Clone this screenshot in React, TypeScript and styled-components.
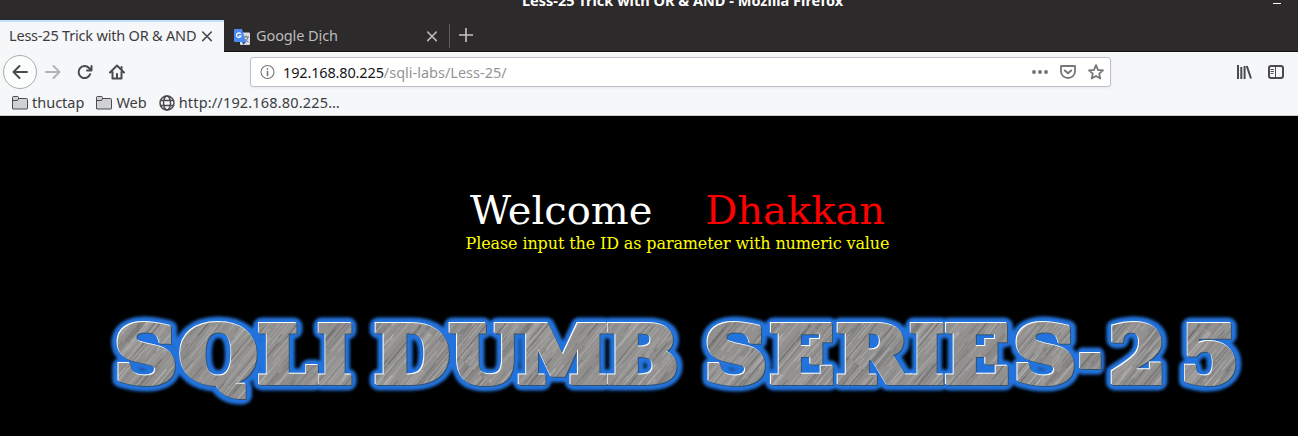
import React from "react";
import styled, { createGlobalStyle } from "styled-components";

const GlobalStyle = createGlobalStyle`
  body { margin: 0; background: #000; }
  * { box-sizing: border-box; }
`;

const Window = styled.div`
  width: 1298px;
  height: 436px;
  display: flex;
  flex-direction: column;
  overflow: hidden;
  background: #000;
  font-family: "Noto Sans", "Open Sans", sans-serif;
  color: #3c3c3f;
`;

const TitleBar = styled.header`
  height: 20px;
  flex: none;
  display: flex;
  position: relative;
  justify-content: center;
  background: #2c2a2b;
  padding-left: 67px;
`;

const Title = styled.div`
  height: 20px;
  margin-top: -10px;
  line-height: 20px;
  font-size: 14.5px;
  font-weight: 700;
  color: #fff;
  white-space: pre;
  letter-spacing: 0.02px;
`;

const Minimize = styled.span`
  position: absolute;
  right: 17px;
  top: 3px;
  width: 8px;
  height: 1px;
  background: #fff;
`;

const TabStrip = styled.nav`
  height: 32px;
  flex: none;
  display: flex;
  background: #2c2a2b;
  box-shadow: inset 0 -1px #151415;
`;

const Tab = styled.div<{ $active?: boolean }>`
  width: ${(p) => (p.$active ? 224 : 225)}px;
  height: 32px;
  display: flex;
  align-items: center;
  padding: 0 10px 0 ${(p) => (p.$active ? 9 : 10)}px;
  color: ${(p) => (p.$active ? "#3c3c3f" : "#bdbcbc")};
  background: ${(p) => (p.$active ? "#f5f7f9" : "transparent")};
  border-top: 2px solid ${(p) => (p.$active ? "#bfe4ff" : "transparent")};
`;

const Label = styled.span<{ $spacing?: number }>`
  font-size: 14.5px;
  line-height: 20px;
  white-space: pre;
  letter-spacing: ${(p) => p.$spacing ?? 0}px;
`;

const TabLabel = styled(Label)`
  flex: 1;
  width: 0;
  margin-top: -4px;
`;

const Favicon = styled.svg`
  margin: -1px 6px 0 0;
`;

const Divider = styled.i`
  width: 1px;
  height: 24px;
  margin: 4px 8px 0 0;
  background: #5d5b5c;
`;

const Toolbar = styled.div`
  height: 40px;
  flex: none;
  display: flex;
  align-items: center;
  padding: 0 14px 0 3px;
  background: #f5f7f9;
`;

const BackButton = styled.button`
  width: 34px;
  height: 34px;
  padding: 0;
  display: grid;
  place-items: center;
  border: 1px solid #a9aaab;
  border-radius: 50%;
  background: #fcfdfd;
`;

const NavIcons = styled.div`
  display: flex;
  gap: 16px;
  margin-left: 8px;
`;

const AddressBar = styled.div`
  width: 861px;
  height: 30px;
  margin: 0 0 0 125px;
  padding: 0 6px 0 9px;
  display: flex;
  align-items: center;
  border: 1px solid #bfc1c8;
  border-radius: 3px;
  background: #fff;
  box-shadow: 0 1px 3px rgba(0, 0, 0, 0.06);
`;

const Url = styled(Label)`
  flex: 1;
  margin-left: 7px;
  color: #959595;
`;

const Host = styled.span`
  color: #161618;
  letter-spacing: -0.15px;
`;

const UrlActions = styled.div`
  display: flex;
  gap: 12px;
`;

const WindowActions = styled.div`
  display: flex;
  gap: 16px;
  margin-left: auto;
`;

const Bookmarks = styled.div`
  height: 24px;
  flex: none;
  display: flex;
  align-items: center;
  gap: 12px;
  padding: 0 12px 2px;
  background: #f5f7f9;
  border-bottom: 1px solid #ccc;
`;

const Bookmark = styled.div`
  display: flex;
  align-items: center;
  gap: 4px;

  & > span {
    margin-top: -2px;
  }
`;

const Page = styled.main`
  height: 320px;
  flex: none;
  padding: 70px 0 0 57px;
  background: #000;
  font-family: "DejaVu Serif", serif;
  text-align: center;
`;

const Heading = styled.h1`
  margin: 0;
  font-size: 40px;
  line-height: 48px;
  font-weight: 400;
  color: #fff;
  white-space: pre;
`;

const Accent = styled.span`
  margin-left: 2px;
  color: #f00;
`;

const Message = styled.p`
  margin: 0;
  font-size: 16px;
  line-height: 19px;
  letter-spacing: -0.12px;
  color: #ff0;
`;

const Banner = styled.svg`
  display: block;
  margin: 47px 0 0 -57px;
`;

const Icon = ({ children, color = "#4b4b4d", width = 2 }: { children: React.ReactNode; color?: string; width?: number }) => (
  <svg width="16" height="16" viewBox="0 0 16 16" fill="none" stroke={color} strokeWidth={width} strokeLinecap="round" strokeLinejoin="round">
    {children}
  </svg>
);

const Close = ({ color }: { color: string }) => (
  <svg width="14" height="14" viewBox="0 0 14 14" stroke={color} strokeWidth="1.6" strokeLinecap="round">
    <path d="M2.7 2l8.6 8.6M11.3 2L2.7 10.6" />
  </svg>
);

const Folder = () => (
  <Icon width={1}>
    <path d="M.5 13.5v-11q0-1 1-1h4q1 0 1 1v1h8q1 0 1 1v9q0 .5-.5.5H1q-.5 0-.5-.5z" fill="#d0d1d2" />
    <path d="M.5 5.5h5l1-2" />
  </Icon>
);

type Glyph = [char: string, left: number, width: number];

const glyphs: Glyph[] = [
  ["S", 117, 58], ["Q", 182, 73], ["L", 260, 55], ["I", 319, 32],
  ["D", 377, 70], ["U", 452, 66], ["M", 521, 84], ["B", 609, 67],
  ["S", 707, 58], ["E", 772, 60], ["R", 839, 68], ["I", 911, 32],
  ["E", 947, 60], ["S", 1016, 58], ["-", 1080, 21], ["2", 1111, 53], ["5", 1183, 54],
];

const Letters = ({ spread, ...props }: React.SVGProps<SVGGElement> & { spread: number }) => (
  <g fontFamily="DejaVu Serif, serif" fontWeight="700" fontSize="77" strokeWidth={spread} strokeMiterlimit="2" {...props}>
    {glyphs.map(([char, left, width], i) => (
      <text key={i} x={left - width * 0.03} y="81.5" textLength={width * 1.06} lengthAdjust="spacingAndGlyphs">
        {char}
      </text>
    ))}
  </g>
);

const noise = (n: number) => {
  const v = Math.sin(n * 127.1 + 11.7) * 43758.5453;
  return v - Math.floor(v);
};

const scratches = Array.from({ length: 520 }, (_, i) => ({
  x: noise(i) * 310 - 30,
  y: noise(i + 500) * 149,
  length: 15 + noise(i + 1000) * 55,
  light: noise(i + 1500) > 0.5,
  opacity: 0.15 + noise(i + 2000) * 0.4,
}));

export default function App() {
  return (
    <Window>
      <GlobalStyle />
      <TitleBar>
        <Title>Less-25 Trick with OR &amp; AND - Mozilla Firefox</Title>
        <Minimize />
      </TitleBar>
      <TabStrip>
        <Tab $active>
          <TabLabel $spacing={-0.2}>Less-25 Trick with OR &amp; AND</TabLabel>
          <Close color="#4b4b4d" />
        </Tab>
        <Tab>
          <Favicon width="16" height="16" viewBox="0 0 16 16">
            <rect x="6" y="3.5" width="10" height="12.5" rx="1" fill="#dcdcdc" />
            <path d="M9 8h6M12 6.5V8M14 8q-1 4-4 5M10.5 9.5q1 2.5 4 3.5" stroke="#667b85" fill="none" />
            <path d="M1 0h7l4 13H1q-1 0-1-1V1q0-1 1-1z" fill="#4a8af4" />
            <path d="M8 13h4l-2.5 3z" fill="#3059ba" />
            <path d="M6.7 4.8A2.3 2.3 0 1 0 7 7H4.8" stroke="#fff" strokeWidth="1.2" fill="none" />
          </Favicon>
          <TabLabel $spacing={-0.1}>Google Dịch</TabLabel>
          <Close color="#bdbcbc" />
        </Tab>
        <Divider />
        <svg width="18" height="30" viewBox="0 0 18 30" stroke="#c5c4c4" strokeWidth="1.6">
          <path d="M1 15h14M8 8v14" />
        </svg>
      </TabStrip>
      <Toolbar>
        <BackButton>
          <Icon><path d="M15 8H1.5M7.5 2L1.5 8l6 6" /></Icon>
        </BackButton>
        <NavIcons>
          <Icon color="#b2b3b5"><path d="M1 8h13.5M8.5 2l6 6-6 6" /></Icon>
          <Icon><path d="M13.2 10.2A6 6 0 1 1 12 4l2 2M14.5 2v4.5H10" /></Icon>
          <Icon>
            <path d="M1 8.5L8 1.5l7 7M3.5 8v6.5h9V8" />
            <path d="M8 14v-4M12.5 3v2" />
          </Icon>
        </NavIcons>
        <AddressBar>
          <Icon color="#777" width={1.1}>
            <circle cx="7.5" cy="8" r="6.5" />
            <path d="M7.5 7.5v4M7.5 4.8v.3" strokeWidth="1.6" />
          </Icon>
          <Url><Host>192.168.80.225</Host>/sqli-labs/Less-25/</Url>
          <UrlActions>
            <Icon color="#777">
              <g fill="#777" stroke="none"><circle cx="2" cy="8" r="2" /><circle cx="8" cy="8" r="2" /><circle cx="14" cy="8" r="2" /></g>
            </Icon>
            <Icon color="#777">
              <path d="M1 2h14v5.5a7 6.5 0 0 1-14 0z" strokeWidth="1.8" />
              <path d="M4.8 6.5L8 9.3l3.2-2.8" />
            </Icon>
            <Icon color="#777" width={1.8}>
              <path d="M8 1.2l2 4.6 5 .5-3.8 3.3 1.1 5L8 12l-4.3 2.6 1.1-5L1 6.3l5-.5z" />
            </Icon>
          </UrlActions>
        </AddressBar>
        <WindowActions>
          <Icon>
            <path d="M2 1v14M5.3 3v12M8.6 2v13M10.8 2l4.2 12.5" strokeLinecap="butt" />
          </Icon>
          <Icon>
            <rect x="1" y="2" width="14" height="12" rx="2" />
            <path d="M7.5 2v12M3 5.5h2.5M3 7.5h2.5M3 9.5h2" strokeWidth="1" />
          </Icon>
        </WindowActions>
      </Toolbar>
      <Bookmarks>
        <Bookmark><Folder /><Label>thuctap</Label></Bookmark>
        <Bookmark><Folder /><Label>Web</Label></Bookmark>
        <Bookmark>
          <Icon width={1.5}>
            <circle cx="8" cy="8" r="7" />
            <ellipse cx="8" cy="8" rx="3.5" ry="7" />
            <path d="M1.5 5.5h13M1.5 10.5h13" />
          </Icon>
          <Label $spacing={0.17}>http://192.168.80.225…</Label>
        </Bookmark>
      </Bookmarks>
      <Page>
        <Heading>Welcome   <Accent> Dhakkan</Accent></Heading>
        <Message>Please input the ID as parameter with numeric value</Message>
        <Banner width="1298" height="110" viewBox="0 0 1298 110">
          <defs>
            <pattern id="brushed" width="251" height="149" patternUnits="userSpaceOnUse" patternTransform="rotate(-50)">
              <rect width="251" height="149" fill="#929190" />
              {scratches.map((s, i) => (
                <rect key={i} x={s.x} y={s.y} width={s.length} height="0.9" fill={s.light ? "#d0cecc" : "#505050"} opacity={s.opacity} />
              ))}
            </pattern>
            <filter id="glow" x="-5%" y="-30%" width="110%" height="160%">
              <feGaussianBlur stdDeviation="1.8" />
            </filter>
          </defs>
          <Letters spread={17} fill="#2373dd" stroke="#2373dd" strokeLinejoin="round" filter="url(#glow)" />
          <Letters spread={6} fill="#34536f" stroke="#34536f" transform="translate(1 1)" />
          <Letters spread={6} fill="#fff" stroke="#fff" transform="translate(-0.9 -0.9)" />
          <Letters spread={6} fill="url(#brushed)" stroke="url(#brushed)" />
        </Banner>
      </Page>
    </Window>
  );
}
